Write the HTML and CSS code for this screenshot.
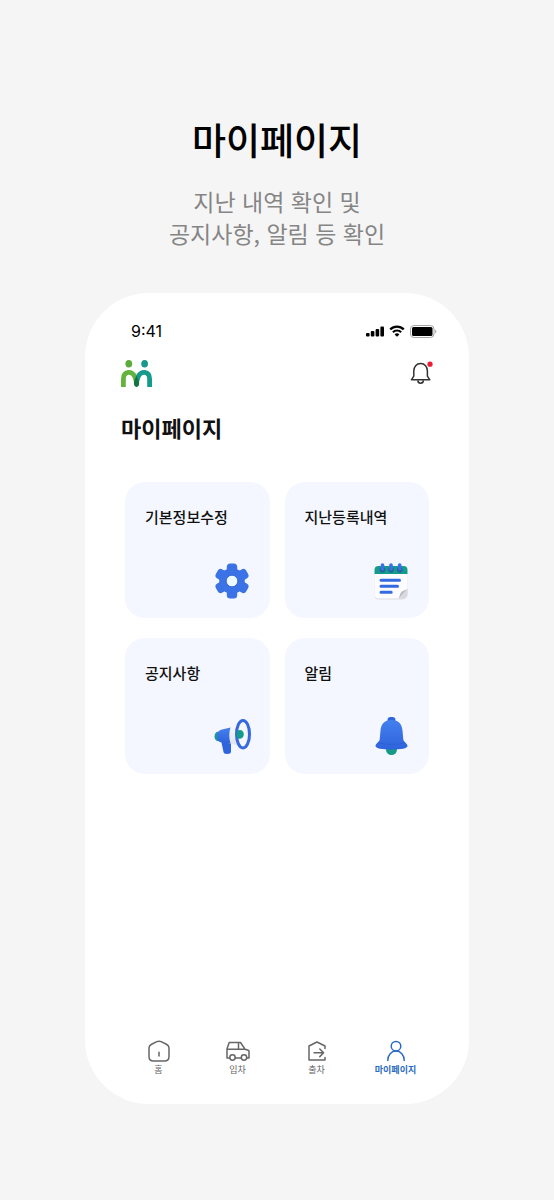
FILE: index.html
```html
<!DOCTYPE html>
<html lang="ko">

<head>
    <meta charset="UTF-8">
    <meta name="viewport" content="width=device-width, initial-scale=1.0">
    <title>마이페이지</title>
    <link rel="stylesheet" href="styles.css">
</head>

<body>

    <header class="intro">
        <h1>마이페이지</h1>
        <p>지난 내역 확인 및<br>공지사항, 알림 등 확인</p>
    </header>

    <div class="phone">
        <div class="status-bar">
            <span class="time">9:41</span>
            <svg class="signal" width="18" height="12" viewBox="0 0 18 12">
                <rect x="0" y="8" width="3.6" height="3.6" rx="1"/>
                <rect x="4.8" y="6" width="3.6" height="5.6" rx="1"/>
                <rect x="9.6" y="4" width="3.6" height="7.6" rx="1"/>
                <rect x="14.4" y="1.6" width="3.6" height="10" rx="1"/>
            </svg>
            <svg class="wifi" width="16" height="12" viewBox="0 0 16 12">
                <path d="M1.2 4.4a9.6 9.6 0 0 1 13.600 0M3.900 7.200a5.800 5.800 0 0 1 8.200 0" fill="none" stroke="#000" stroke-width="2.200"/>
                <path d="M5.600 9.400a3.400 3.400 0 0 1 4.800 0L8 11.800z"/>
            </svg>
            <svg class="battery" width="27" height="13" viewBox="0 0 27 13">
                <rect x=".5" y=".5" width="23.5" height="12" rx="3.5" fill="none" stroke="#a6a6a6"/>
                <rect x="2" y="2" width="20.5" height="9" rx="1.5"/>
                <path d="M25.2 4.5v4c1.6-.6 1.6-3.4 0-4z" fill="#a6a6a6"/>
            </svg>
        </div>

        <div class="top-bar">
            <a href="#" class="logo" aria-label="홈으로">
                <svg width="31" height="27" viewBox="0 0 31 27">
                    <ellipse cx="7.8" cy="3.8" rx="3.4" ry="3.8" fill="#5cab3e"/>
                    <ellipse cx="23.6" cy="3.8" rx="3.4" ry="3.8" fill="#18998c"/>
                    <path d="M2.4 27v-8c0-8.200 9.100-8.600 11.400-2.400L16 23.500" fill="none" stroke="#65b33f" stroke-width="4.8"/>
                    <path d="M28.600 27v-8c0-8.200-9.100-8.600-11.400-2.400L15 23.500" fill="none" stroke="#149b8c" stroke-width="4.8"/>
                    <path d="M15.500 15.500l2.400 5.900c.7 3.300-.3 5.200-2.300 5.600-2-.4-3.200-2.300-2.500-5.600z" fill="#14733f"/>
                </svg>
            </a>
            <button type="button" class="notice" aria-label="알림 보기">
                <svg width="24" height="24" viewBox="0 0 24 24">
                    <path d="M2.400 18.800l2.400-3.700V10c0-4.200 2.600-7.500 6.800-7.500s6.800 3.300 6.800 7.500v5.100l2.400 3.700z" fill="none" stroke="#333" stroke-width="1.5" stroke-linejoin="round"/>
                    <path d="M8.800 19.400c.2 3.800 5.400 3.800 5.600 0" fill="none" stroke="#333" stroke-width="1.5"/>
                    <circle cx="21" cy="3.200" r="2.600" fill="#ec1c35"/>
                </svg>
            </button>
        </div>

        <main>
            <h2>마이페이지</h2>

            <div class="menu">
                <a href="#" class="card">
                    <span>기본정보수정</span>
                    <svg width="40" height="40" viewBox="0 0 40 40">
                        <defs>
                            <linearGradient id="blue" x1="0" y1="0" x2="0" y2="1">
                                <stop offset="0" stop-color="#4480ee"/>
                                <stop offset="1" stop-color="#2f63dc"/>
                            </linearGradient>
                        </defs>
                        <g fill="#3b72e5">
                            <circle cx="20" cy="20" r="12.800"/>
                            <rect x="14.800" y="2.500" width="10.400" height="12" rx="3.500"/>
                            <rect x="14.800" y="2.500" width="10.400" height="12" rx="3.500" transform="rotate(60 20 20)"/>
                            <rect x="14.800" y="2.500" width="10.400" height="12" rx="3.500" transform="rotate(120 20 20)"/>
                            <rect x="14.800" y="2.500" width="10.400" height="12" rx="3.500" transform="rotate(180 20 20)"/>
                            <rect x="14.800" y="2.500" width="10.400" height="12" rx="3.500" transform="rotate(240 20 20)"/>
                            <rect x="14.800" y="2.500" width="10.400" height="12" rx="3.500" transform="rotate(300 20 20)"/>
                        </g>
                        <circle cx="20" cy="20" r="5.800" fill="#edf9ff" stroke="#2d5fcd" stroke-width=".8"/>
                    </svg>
                </a>
                <a href="#" class="card">
                    <span>지난등록내역</span>
                    <svg width="40" height="40" viewBox="0 0 40 40">
                        <path d="M3.500 12h33v21.500a5 5 0 0 1-5 5h-24a4 4 0 0 1-4-4z" fill="#dcdde3"/>
                        <path d="M3.500 11h33v16.500l-9 10h-20a4 4 0 0 1-4-4z" fill="#fcfcfe"/>
                        <path d="M27.500 37.500c1.500-1.800 1-4.200 3-6.500 2-1.500 4-1.500 6-3.500v5a5 5 0 0 1-5 5z" fill="#d9dae0"/>
                        <path d="M27.500 37.500c1.500-1.800 1-4.200 3-6.500 2-1.500 4-1.500 6-3.500z" fill="#b9bac3"/>
                        <path d="M3.500 13V9a4 4 0 0 1 4-4h25a4 4 0 0 1 4 4v4z" fill="#159b8d"/>
                        <g fill="#23619a">
                            <circle cx="11.500" cy="8.800" r="2.800"/>
                            <circle cx="20" cy="8.800" r="2.800"/>
                            <circle cx="28.700" cy="8.800" r="2.800"/>
                        </g>
                        <path d="M11.500 4v4M20 4v4M28.700 4v4" stroke="#3b70e6" stroke-width="3.600" stroke-linecap="round"/>
                        <path d="M10 19.200h18.500M10 25.200h16.500M10 31.200h10.200" stroke="#346ae2" stroke-width="3" stroke-linecap="round"/>
                    </svg>
                </a>
                <a href="#" class="card">
                    <span>공지사항</span>
                    <svg width="40" height="40" viewBox="0 0 40 40">
                        <defs>
                            <linearGradient id="cone" x1="0" y1="0" x2="0" y2="1">
                                <stop offset="0" stop-color="#ffffff"/>
                                <stop offset="1" stop-color="#dcdfe8"/>
                            </linearGradient>
                        </defs>
                        <ellipse cx="6" cy="19.500" rx="3.500" ry="4.700" fill="#169d90"/>
                        <path d="M8.500 21l10.500 1.500v12c0 1.800-1.500 2.500-4 2.500-2.200 0-3.300-.7-3.600-2.500z" fill="#2f65dc"/>
                        <path d="M16 11.500C22 11 26 7.500 29 2.500l4 16-2 13.500c-4-3-9-5.500-15-6z" fill="url(#cone)"/>
                        <path d="M18.500 10.500l-9.500 2.200c-2.600.8-4 3.300-4 6.500s1.200 5.300 3.500 6.100l10 1c-1.600-5-1.600-10.800 0-15.800z" fill="url(#blue)"/>
                        <ellipse cx="31" cy="17.200" rx="6.500" ry="13.800" fill="#f4f6fc" stroke="#3669df" stroke-width="3"/>
                        <path d="M25.500 13.500c3.400-1.500 6.300.2 6.300 3.800s-3 5.300-6.300 4.200c-1.200-2.300-1.200-5.700 0-8z" fill="#159b8d"/>
                    </svg>
                </a>
                <a href="#" class="card">
                    <span>알림</span>
                    <svg width="40" height="40" viewBox="0 0 40 40">
                        <circle cx="20.500" cy="32.500" r="5.500" fill="#159b83"/>
                        <rect x="16.500" y="0" width="8" height="8" rx="3.200" fill="#2f66df"/>
                        <path d="M20.500 3c-6.800 0-10.500 4-11 10.500l-.8 9c-.4 2.500-4.200 3.800-4.200 6.500 0 2.400 6.500 3.500 16 3.500s16-1.100 16-3.500c0-2.700-3.800-4-4.200-6.500l-.8-9C31 7 27.300 3 20.500 3z" fill="url(#blue)"/>
                        <path d="M7 25.600c6.500 2.300 20.500 2.300 27 0" fill="none" stroke="#2d5ed0" stroke-width=".8"/>
                    </svg>
                </a>
            </div>
        </main>

        <nav class="tabs">
            <a href="#">
                <svg width="24" height="24" viewBox="0 0 24 24">
                    <path d="M9.800 2.700L4.200 5.500C2.600 6.300 2 7.400 2 9v8.500C2 20.300 3.700 22 6.500 22h11c2.800 0 4.500-1.700 4.500-4.500V9c0-1.600-.6-2.700-2.200-3.500l-5.600-2.800c-1.600-.8-2.800-.8-4.400 0zM12 13.200V17"/>
                </svg>
                <span>홈</span>
            </a>
            <a href="#">
                <svg width="24" height="24" viewBox="0 0 24 24">
                    <path d="M3.500 19H1V9.800L3.200 3.500h11.300l4.500 6.700 3.200 1c.6.300.8.800.8 1.300V19h-2M9.300 19h5.700M1 10.200h18M12.500 3.500v6.700"/>
                    <circle cx="6.500" cy="18.500" r="2.700"/>
                    <circle cx="18" cy="18.500" r="2.700"/>
                </svg>
                <span>입차</span>
            </a>
            <a href="#">
                <svg width="24" height="24" viewBox="0 0 24 24">
                    <path d="M20 9.500V7l-8-4-8 4v14h16v-2.500M9 13.800h9.500M14.800 10l3.800 3.800-3.800 3.800"/>
                </svg>
                <span>출차</span>
            </a>
            <a href="#" class="active">
                <svg width="24" height="24" viewBox="0 0 24 24">
                    <circle cx="12" cy="7.200" r="4.800"/>
                    <path d="M3.800 21.500c0-5.600 3.500-9.500 8.200-9.500s8.200 3.900 8.200 9.500"/>
                </svg>
                <span>마이페이지</span>
            </a>
        </nav>
    </div>

</body>

</html>
```
FILE: styles.css
```css
* {
    box-sizing: border-box;
}

body {
    margin: 0;
    padding: 111px 85px 96px;
    min-height: 100vh;
    display: flex;
    flex-direction: column;
    background-color: #f5f5f5;
    color: #111;
    font-family: "Noto Sans CJK KR", sans-serif;
}

h1,
h2,
p {
    margin: 0;
}

a {
    color: inherit;
    text-decoration: none;
}

svg {
    display: block;
    overflow: visible;
}

.intro {
    text-align: center;
}

.intro h1 {
    font-size: 37px;
    font-weight: 500;
    line-height: 56px;
    color: #000;
}

.intro p {
    margin-top: 18px;
    font-size: 23px;
    font-weight: 400;
    line-height: 32px;
    color: #858585;
}

.phone {
    flex: 1;
    display: flex;
    flex-direction: column;
    margin-top: 44px;
    padding: 28px 36px 27px;
    border-radius: 64px;
    background-color: #fff;
}

.status-bar {
    display: flex;
    align-items: center;
    gap: 5px;
    height: 20px;
    margin-right: -4px;
    padding: 0 0 0 10px;
}

.time {
    margin-right: auto;
    font-family: Inter, sans-serif;
    font-size: 16px;
    font-weight: 400;
    color: #000;
}

.top-bar {
    display: flex;
    align-items: center;
    justify-content: space-between;
    height: 28px;
    margin-top: 18px;
}

.notice {
    padding: 0;
    border: none;
    background: none;
    cursor: pointer;
}

main {
    flex: 1;
    margin-top: 24px;
}

main h2 {
    font-size: 22px;
    font-weight: 700;
    line-height: 32px;
}

.menu {
    display: grid;
    grid-template-columns: 1fr 1fr;
    gap: 20px 15px;
    margin: 39px 4px 0;
}

.card {
    display: flex;
    flex-direction: column;
    justify-content: space-between;
    height: 136px;
    padding: 23px 18px 17px 20px;
    border-radius: 20px;
    background-color: #f4f7ff;
    font-size: 15px;
    font-weight: 500;
    line-height: 24px;
}

.card svg {
    align-self: flex-end;
}

.tabs {
    display: grid;
    grid-template-columns: repeat(4, 1fr);
    margin: 0 -2px;
}

.tabs a {
    display: flex;
    flex-direction: column;
    align-items: center;
    font-size: 9px;
    line-height: 14px;
    color: #666;
}

.tabs svg {
    fill: none;
    stroke: currentColor;
    stroke-width: 1.5;
    stroke-linecap: round;
    stroke-linejoin: round;
}

.tabs .active {
    font-weight: 700;
    color: #2b6bc0;
}
```
